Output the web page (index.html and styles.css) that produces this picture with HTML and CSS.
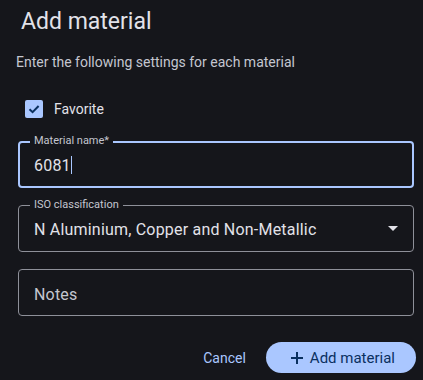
FILE: index.html
```html
<!DOCTYPE html>
<html lang="en">
<head>
    <meta charset="UTF-8">
    <meta name="viewport" content="width=device-width, initial-scale=1.0">
    <title>Add material</title>
    <link rel="stylesheet" href="styles.css">
</head>
<body>
    <div class="dialog">
        <h1 class="title">Add material</h1>
        <p class="subtitle">Enter the following settings for each material</p>

        <!-- favorite -->
        <label class="check-row">
            <span class="checkbox">
                <svg width="14" height="14" viewBox="0 0 14 14"><path d="M2.5 7.2 L5.6 10.2 L11.6 4" fill="none" stroke="#0a305f" stroke-width="2"/></svg>
            </span>
            <span class="check-label">Favorite</span>
        </label>

        <!-- fields -->
        <div class="field focused">
            <span class="field-label">Material name*</span>
            <span class="field-value">6081<span class="caret"></span></span>
        </div>

        <div class="field">
            <span class="field-label">ISO classification</span>
            <span class="field-value">N Aluminium, Copper and Non-Metallic</span>
            <svg class="arrow" width="10" height="5" viewBox="0 0 10 5"><path d="M0 0 L10 0 L5 5 Z" fill="#e2e2e9"/></svg>
        </div>

        <div class="field">
            <span class="field-placeholder">Notes</span>
        </div>

        <div class="actions">
            <button class="btn-text">Cancel</button>
            <button class="btn-filled">
                <svg width="12" height="12" viewBox="0 0 12 12"><path d="M6 0 V12 M0 6 H12" stroke="#0a305f" stroke-width="2"/></svg>
                Add material
            </button>
        </div>
    </div>
</body>
</html>
```

FILE: styles.css
```css
body {
    margin: 0;
    background-color: #15161b;
    font-family: Roboto, "Liberation Sans", sans-serif;
    color: #e2e2e9;
}

.dialog {
    padding: 8px 9px 0 18px;
}

.title {
    margin: 0;
    padding-left: 3px;
    font-size: 23px;
    font-weight: 400;
    line-height: 28px;
}

.subtitle {
    margin: 16px 0 0 -2px;
    font-size: 14px;
    line-height: 20px;
    color: #c4c6d0;
}

.check-row {
    display: flex;
    align-items: center;
    gap: 11px;
    margin: 28px 0 0 7px;
    height: 18px;
}

.checkbox {
    width: 18px;
    height: 18px;
    border-radius: 2px;
    background-color: #aac7ff;
    display: flex;
    align-items: center;
    justify-content: center;
}

.check-label {
    font-size: 14px;
}

.field {
    position: relative;
    box-sizing: border-box;
    width: 396px;
    height: 47px;
    border: 1px solid #8e9099;
    border-radius: 4px;
    margin-top: 17px;
    display: flex;
    align-items: center;
    padding: 0 15px;
}

.field.focused {
    border: 2px solid #aac7ff;
    margin-top: 23px;
    padding: 0 14px;
}

.field-label {
    position: absolute;
    top: -8px;
    left: 11px;
    padding: 0 4px;
    background-color: #15161b;
    font-size: 11px;
    line-height: 14px;
    color: #c4c6d0;
}

.field.focused .field-label {
    top: -9px;
    left: 10px;
}

.field-value,
.field-placeholder {
    font-size: 16px;
    letter-spacing: 0.2px;
    margin-top: 2px;
}

.field-placeholder {
    margin-top: 4px;
    color: #c4c6d0;
}

.caret {
    display: inline-block;
    width: 1px;
    height: 18px;
    background-color: #aac7ff;
    vertical-align: -3px;
}

.arrow {
    margin-left: auto;
}

.actions {
    display: flex;
    justify-content: flex-end;
    align-items: center;
    gap: 20px;
    margin: 26px -2px 0 0;
}

.btn-text {
    background: none;
    border: none;
    font-family: inherit;
    font-size: 14px;
    color: #aac7ff;
    padding: 0;
}

.btn-filled {
    display: flex;
    align-items: center;
    gap: 7px;
    height: 31px;
    padding: 0 21px 0 25px;
    border: none;
    border-radius: 16px;
    background-color: #aac7ff;
    color: #0a305f;
    font-family: inherit;
    font-size: 15px;
}
```
